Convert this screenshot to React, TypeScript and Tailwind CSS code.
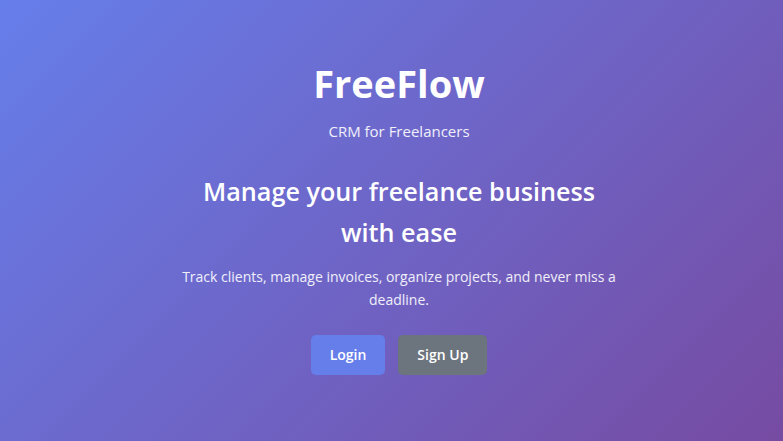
import React from 'react';

export default function App() {
  return (
    <div
      className="min-h-screen w-full flex items-center justify-center bg-[linear-gradient(135deg,#667eea_0%,#764ba2_100%)] text-white pl-[15px] pb-[8px]"
      style={{ fontFamily: '"Open Sans", "Noto Sans", sans-serif' }}
    >
      <div className="flex flex-col items-center text-center w-[440px]">
        <h1 className="text-[38px] font-bold leading-[48px]">FreeFlow</h1>
        <p className="mt-[13px] text-[15px] leading-[22px] text-white/90">CRM for Freelancers</p>
        <h2 className="mt-[29px] text-[25.2px] font-semibold leading-[41px]">
          Manage your freelance business with ease
        </h2>
        <p className="mt-[12px] text-[14px] leading-[23px] text-white/90">
          Track clients, manage invoices, organize projects, and never miss a deadline.
        </p>
        <div className="mt-[24px] flex gap-[13px]">
          <button className="h-[40px] px-[19px] rounded-[5px] bg-[#667eea] text-[14px] font-semibold">
            Login
          </button>
          <button className="h-[40px] px-[19px] rounded-[5px] bg-[#6c757d] text-[14px] font-semibold">
            Sign Up
          </button>
        </div>
      </div>
    </div>
  );
}
